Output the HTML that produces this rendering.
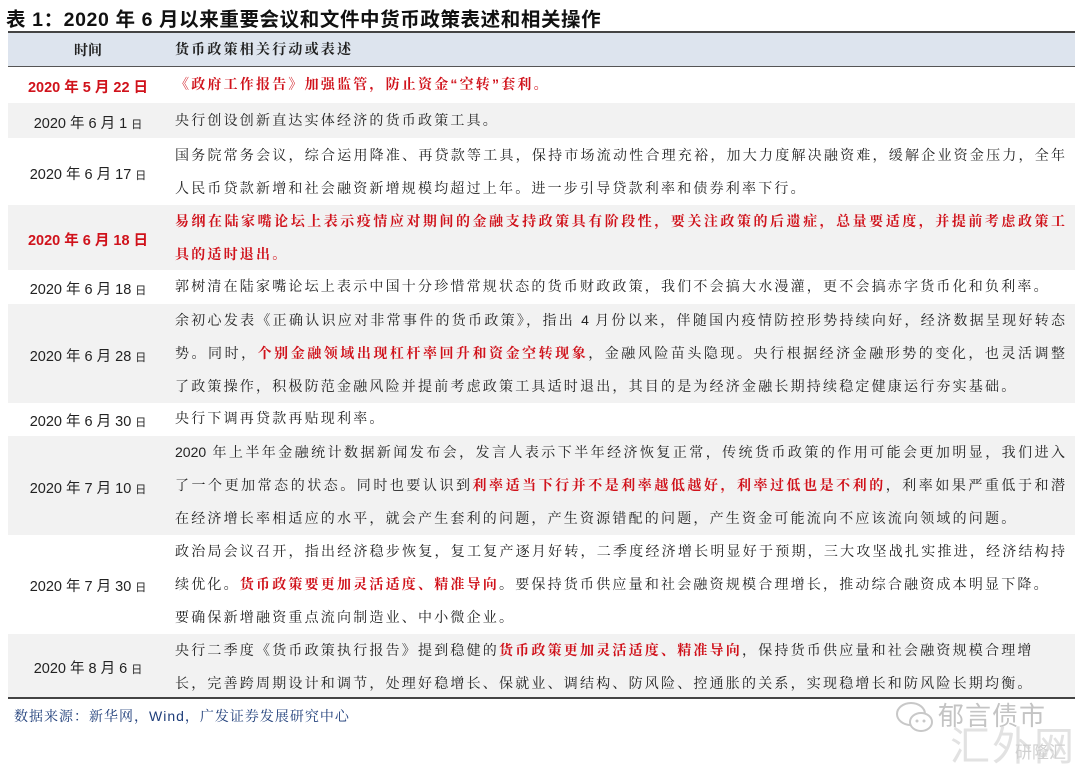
<!DOCTYPE html>
<html><head><meta charset="utf-8"><style>
*{margin:0;padding:0;box-sizing:border-box}
html,body{width:1080px;height:764px;overflow:hidden}
body{background:#fff;position:relative;font-family:"Liberation Sans","Noto Serif CJK SC",serif;color:#222}
.title{position:absolute;left:6px;top:3px;font-family:"Liberation Sans","Noto Sans CJK SC",sans-serif;font-weight:bold;font-size:19.5px;color:#111;letter-spacing:0.6px;white-space:nowrap}
.row{position:absolute;left:8px;width:1067px}
.g{background:#f2f2f2}
.hd{background:#dde4ee;border-top:2px solid #444;border-bottom:1.5px solid #555}
.d{position:absolute;left:0;width:160px;text-align:center;font-size:14.5px;font-family:"Liberation Sans","Noto Sans CJK SC",sans-serif;white-space:nowrap}
.d small{font-size:11px}
.t{position:absolute;left:167px;width:890px;font-size:14px;letter-spacing:2.2px;font-family:"Liberation Sans","Noto Serif CJK SC",serif}
.t div{height:33px;line-height:33px;white-space:nowrap;overflow:visible}
.j{text-align:justify;text-align-last:justify;letter-spacing:0}
.r{color:#d0121b;font-weight:bold}
.rd{color:#d0121b;font-weight:bold}
.wm{position:absolute;color:#c8c8c8;font-family:"Noto Sans CJK SC",sans-serif;white-space:nowrap}
</style></head><body>
<div class="title">表 1：2020 年 6 月以来重要会议和文件中货币政策表述和相关操作</div>

<div class="row hd" style="top:31px;height:36px">
<div class="d" style="top:7px;font-weight:bold;font-size:14px;font-family:'Noto Serif CJK SC',serif">时间</div>
<div class="t" style="top:0px;font-weight:bold"><div>货币政策相关行动或表述</div></div>
</div>

<div class="row" style="top:67px;height:35px">
<div class="d rd" style="top:9px">2020 年 5 月 22 日</div>
<div class="t r" style="top:1px"><div>《政府工作报告》加强监管，防止资金“空转”套利。</div></div>
</div>

<div class="row g" style="top:103px;height:35px">
<div class="d" style="top:9px">2020 年 6 月 1 <small>日</small></div>
<div class="t" style="top:1px"><div>央行创设创新直达实体经济的货币政策工具。</div></div>
</div>

<div class="row" style="top:139px;height:65px">
<div class="d" style="top:24px">2020 年 6 月 17 <small>日</small></div>
<div class="t" style="top:0px"><div class="j">国务院常务会议，综合运用降准、再贷款等工具，保持市场流动性合理充裕，加大力度解决融资难，缓解企业资金压力，全年</div><div>人民币贷款新增和社会融资新增规模均超过上年。进一步引导贷款利率和债券利率下行。</div></div>
</div>

<div class="row g" style="top:205px;height:65px">
<div class="d rd" style="top:24px">2020 年 6 月 18 日</div>
<div class="t r" style="top:0px"><div class="j">易纲在陆家嘴论坛上表示疫情应对期间的金融支持政策具有阶段性，要关注政策的后遗症，总量要适度，并提前考虑政策工</div><div>具的适时退出。</div></div>
</div>

<div class="row" style="top:271px;height:32px">
<div class="d" style="top:7px">2020 年 6 月 18 <small>日</small></div>
<div class="t" style="top:-1px"><div>郭树清在陆家嘴论坛上表示中国十分珍惜常规状态的货币财政政策，我们不会搞大水漫灌，更不会搞赤字货币化和负利率。</div></div>
</div>

<div class="row g" style="top:304px;height:99px">
<div class="d" style="top:41px">2020 年 6 月 28 <small>日</small></div>
<div class="t" style="top:0px"><div class="j">余初心发表《正确认识应对非常事件的货币政策》，指出 4 月份以来，伴随国内疫情防控形势持续向好，经济数据呈现好转态</div><div class="j">势。同时，<span class="r">个别金融领域出现杠杆率回升和资金空转现象</span>，金融风险苗头隐现。央行根据经济金融形势的变化，也灵活调整</div><div>了政策操作，积极防范金融风险并提前考虑政策工具适时退出，其目的是为经济金融长期持续稳定健康运行夯实基础。</div></div>
</div>

<div class="row" style="top:404px;height:31px">
<div class="d" style="top:6px">2020 年 6 月 30 <small>日</small></div>
<div class="t" style="top:-2px"><div>央行下调再贷款再贴现利率。</div></div>
</div>

<div class="row g" style="top:436px;height:99px">
<div class="d" style="top:41px">2020 年 7 月 10 <small>日</small></div>
<div class="t" style="top:0px"><div class="j">2020 年上半年金融统计数据新闻发布会，发言人表示下半年经济恢复正常，传统货币政策的作用可能会更加明显，我们进入</div><div class="j">了一个更加常态的状态。同时也要认识到<span class="r">利率适当下行并不是利率越低越好，利率过低也是不利的</span>，利率如果严重低于和潜</div><div>在经济增长率相适应的水平，就会产生套利的问题，产生资源错配的问题，产生资金可能流向不应该流向领域的问题。</div></div>
</div>

<div class="row" style="top:536px;height:97px">
<div class="d" style="top:39px">2020 年 7 月 30 <small>日</small></div>
<div class="t" style="top:-1px"><div class="j">政治局会议召开，指出经济稳步恢复，复工复产逐月好转，二季度经济增长明显好于预期，三大攻坚战扎实推进，经济结构持</div><div>续优化。<span class="r">货币政策要更加灵活适度、精准导向</span>。要保持货币供应量和社会融资规模合理增长，推动综合融资成本明显下降。</div><div>要确保新增融资重点流向制造业、中小微企业。</div></div>
</div>

<div class="row g" style="top:634px;height:65px;border-bottom:2px solid #444">
<div class="d" style="top:23px">2020 年 8 月 6 <small>日</small></div>
<div class="t" style="top:0px"><div>央行二季度《货币政策执行报告》提到稳健的<span class="r">货币政策更加灵活适度、精准导向</span>，保持货币供应量和社会融资规模合理增</div><div>长，完善跨周期设计和调节，处理好稳增长、保就业、调结构、防风险、控通胀的关系，实现稳增长和防风险长期均衡。</div></div>
</div>

<div style="position:absolute;left:14px;top:706px;font-size:14px;color:#1f3e7a;font-family:'Liberation Sans','Noto Serif CJK SC',serif;letter-spacing:1px;white-space:nowrap">数据来源：新华网，Wind，广发证券发展研究中心</div>

<svg style="position:absolute;left:893px;top:698px" width="45" height="40"><ellipse cx="18" cy="16" rx="14" ry="11" fill="none" stroke="#c8c8c8" stroke-width="2"/><ellipse cx="28" cy="24" rx="11" ry="9" fill="#fff" stroke="#c8c8c8" stroke-width="2"/><circle cx="24" cy="23" r="1.5" fill="#c8c8c8"/><circle cx="31" cy="23" r="1.5" fill="#c8c8c8"/></svg>
<div class="wm" style="left:938px;top:696px;font-size:26px;letter-spacing:1px;color:#c4c4c4">郁言债市</div>
<div class="wm" style="left:950px;top:714px;font-size:40px;color:#e2e2e2;letter-spacing:2px">汇外网</div>
<div class="wm" style="left:1015px;top:738px;font-size:17px;color:#d0d0d0">研隆汇</div>
</body></html>
